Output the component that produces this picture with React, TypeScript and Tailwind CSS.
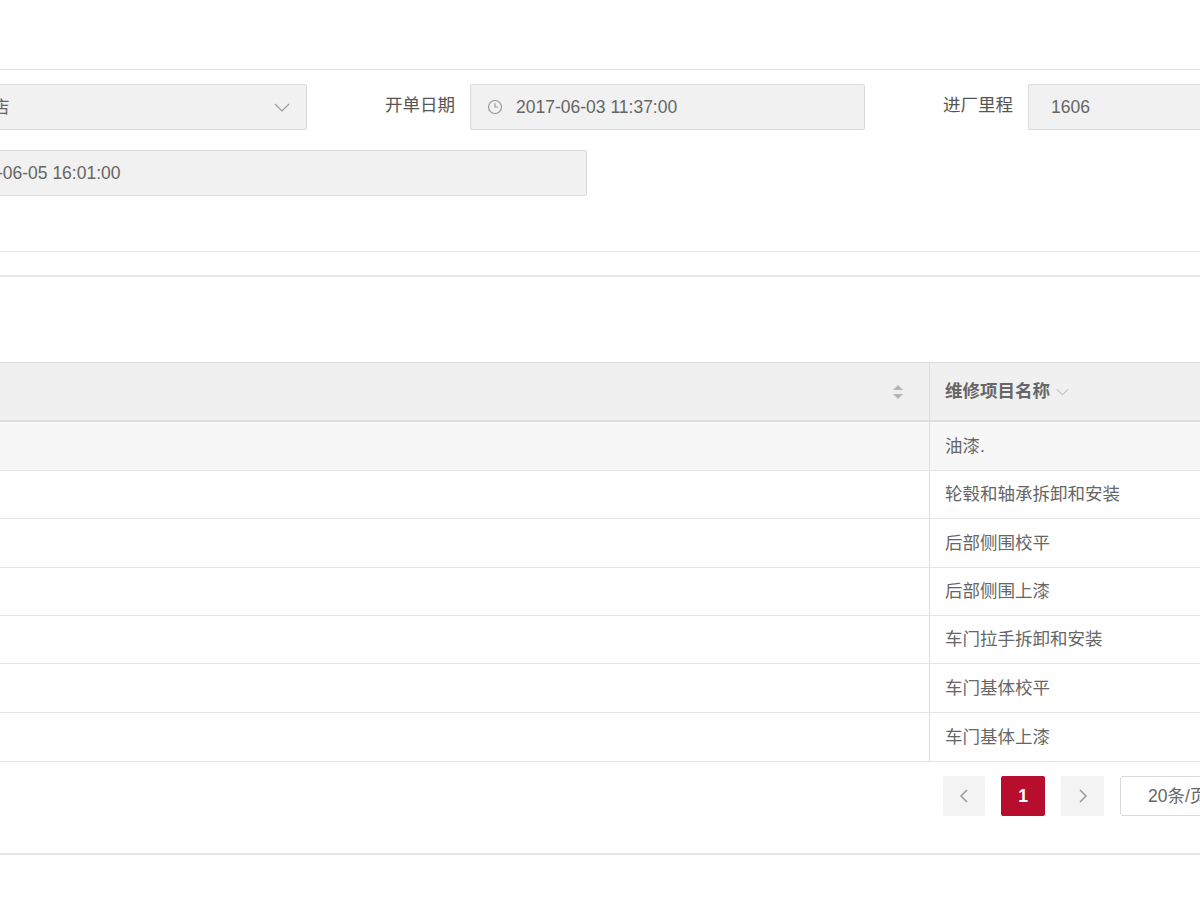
import React from "react";

const rows = [
  { name: "油漆.", h: "h-[49px]", bg: "bg-[#f7f7f7]" },
  { name: "轮毂和轴承拆卸和安装", h: "h-[48px]", bg: "bg-white" },
  { name: "后部侧围校平", h: "h-[49px]", bg: "bg-white" },
  { name: "后部侧围上漆", h: "h-[48px]", bg: "bg-white" },
  { name: "车门拉手拆卸和安装", h: "h-[48px]", bg: "bg-white" },
  { name: "车门基体校平", h: "h-[49px]", bg: "bg-white" },
  { name: "车门基体上漆", h: "h-[49px]", bg: "bg-white" },
];

const Clock = () => (
  <svg width="16" height="16" viewBox="0 0 16 16" fill="none" stroke="#999999" strokeWidth="1.2">
    <circle cx="8" cy="8" r="6.5" />
    <path d="M8 4.2V8h3" />
  </svg>
);

const Chevron = ({ w = 16, h = 9, color = "#9a9a9a" }: { w?: number; h?: number; color?: string }) => (
  <svg width={w} height={h} viewBox="0 0 16 9" fill="none" stroke={color} strokeWidth="1.2">
    <path d="M1 1l7 7 7-7" />
  </svg>
);

const Field = ({ label, width, children }: { label: string; width: string; children: React.ReactNode }) => (
  <div className="flex items-start shrink-0">
    <div className="w-[148px] shrink-0 pr-[15px] text-right leading-[42px] text-[#555]">{label}</div>
    <div className={`${width} shrink-0 h-[46px] flex items-center rounded-[2px] border border-[#d9d9d9] bg-[#f1f1f1] text-[#666]`}>
      {children}
    </div>
  </div>
);

export default function App() {
  return (
    <div className="w-[1200px] h-[900px] overflow-hidden bg-white text-[17.5px] text-[#666] font-['Liberation_Sans','Noto_Sans_CJK_SC',sans-serif]">
      <div className="h-[69px]" />
      <div className="h-[183px] border-t border-b border-t-[#e2e2e2] border-b-[#e6e8ee] pt-[14px]">
        <div className="flex ml-[-236px] gap-[15px]">
          <Field label="维修门店" width="w-[395px]">
            <span className="flex-1 pl-[9px] whitespace-nowrap">合作维修店</span>
            <span className="pr-[16px]">
              <Chevron />
            </span>
          </Field>
          <Field label="开单日期" width="w-[395px]">
            <span className="pl-[16px] pr-[13px] flex">
              <Clock />
            </span>
            <span>2017-06-03 11:37:00</span>
          </Field>
          <Field label="进厂里程" width="w-[395px]">
            <span className="pl-[22px]">1606</span>
          </Field>
        </div>
        <div className="flex ml-[-236px] mt-[20px]">
          <Field label="交车日期" width="w-[675px]">
            <span className="pl-[16px] pr-[13px] flex">
              <Clock />
            </span>
            <span>2017-06-05 16:01:00</span>
          </Field>
        </div>
      </div>
      <div className="h-[23px]" />
      <div className="border-t-2 border-[#e6e6e6] h-[87px]" />

      <div className="w-[1400px] border-t border-[#dcdcdc]">
        <div className="flex h-[59px] bg-[#f0f0f0] border-b-2 border-[#dddddd]">
          <div className="w-[930px] shrink-0 border-r border-[#dedede] flex items-center justify-end pr-[25px]">
            <svg width="12" height="16" viewBox="0 0 12 16">
              <path d="M6 1l5 5H1z" fill="#b5b5b5" />
              <path d="M6 15l5-5H1z" fill="#b5b5b5" />
            </svg>
          </div>
          <div className="flex-1 flex items-center pl-[15px] font-bold text-[#666]">
            维修项目名称
            <span className="ml-[6px] flex">
              <Chevron w={13} h={8} color="#aaaaaa" />
            </span>
          </div>
        </div>
        {rows.map((r) => (
          <div key={r.name} className={`flex ${r.h} ${r.bg} border-b border-[#e4e4e4]`}>
            <div className="w-[930px] shrink-0 border-r border-[#dedede]" />
            <div className="flex-1 flex items-center pl-[15px]">{r.name}</div>
          </div>
        ))}
      </div>

      <div className="flex items-start gap-[16px] pl-[943px] pt-[14px] h-[93px] border-b-2 border-[#e6e6e6]">
        <div className="w-[42px] shrink-0 h-[40px] rounded-[2px] bg-[#f3f3f3] flex items-center justify-center">
          <svg width="8" height="14" viewBox="0 0 8 14" fill="none" stroke="#9a9a9a" strokeWidth="1.5">
            <path d="M7 1L1 7l6 6" />
          </svg>
        </div>
        <div className="w-[44px] shrink-0 h-[40px] rounded-[2px] bg-[#b80e2e] flex items-center justify-center text-white font-bold">
          1
        </div>
        <div className="w-[43px] shrink-0 h-[40px] rounded-[2px] bg-[#f3f3f3] flex items-center justify-center">
          <svg width="8" height="14" viewBox="0 0 8 14" fill="none" stroke="#9a9a9a" strokeWidth="1.5">
            <path d="M1 1l6 6-6 6" />
          </svg>
        </div>
        <div className="w-[120px] shrink-0 h-[40px] rounded-[3px] border border-[#d9d9d9] bg-white flex items-center pl-[27px] whitespace-nowrap">
          20条/页
        </div>
      </div>
    </div>
  );
}
